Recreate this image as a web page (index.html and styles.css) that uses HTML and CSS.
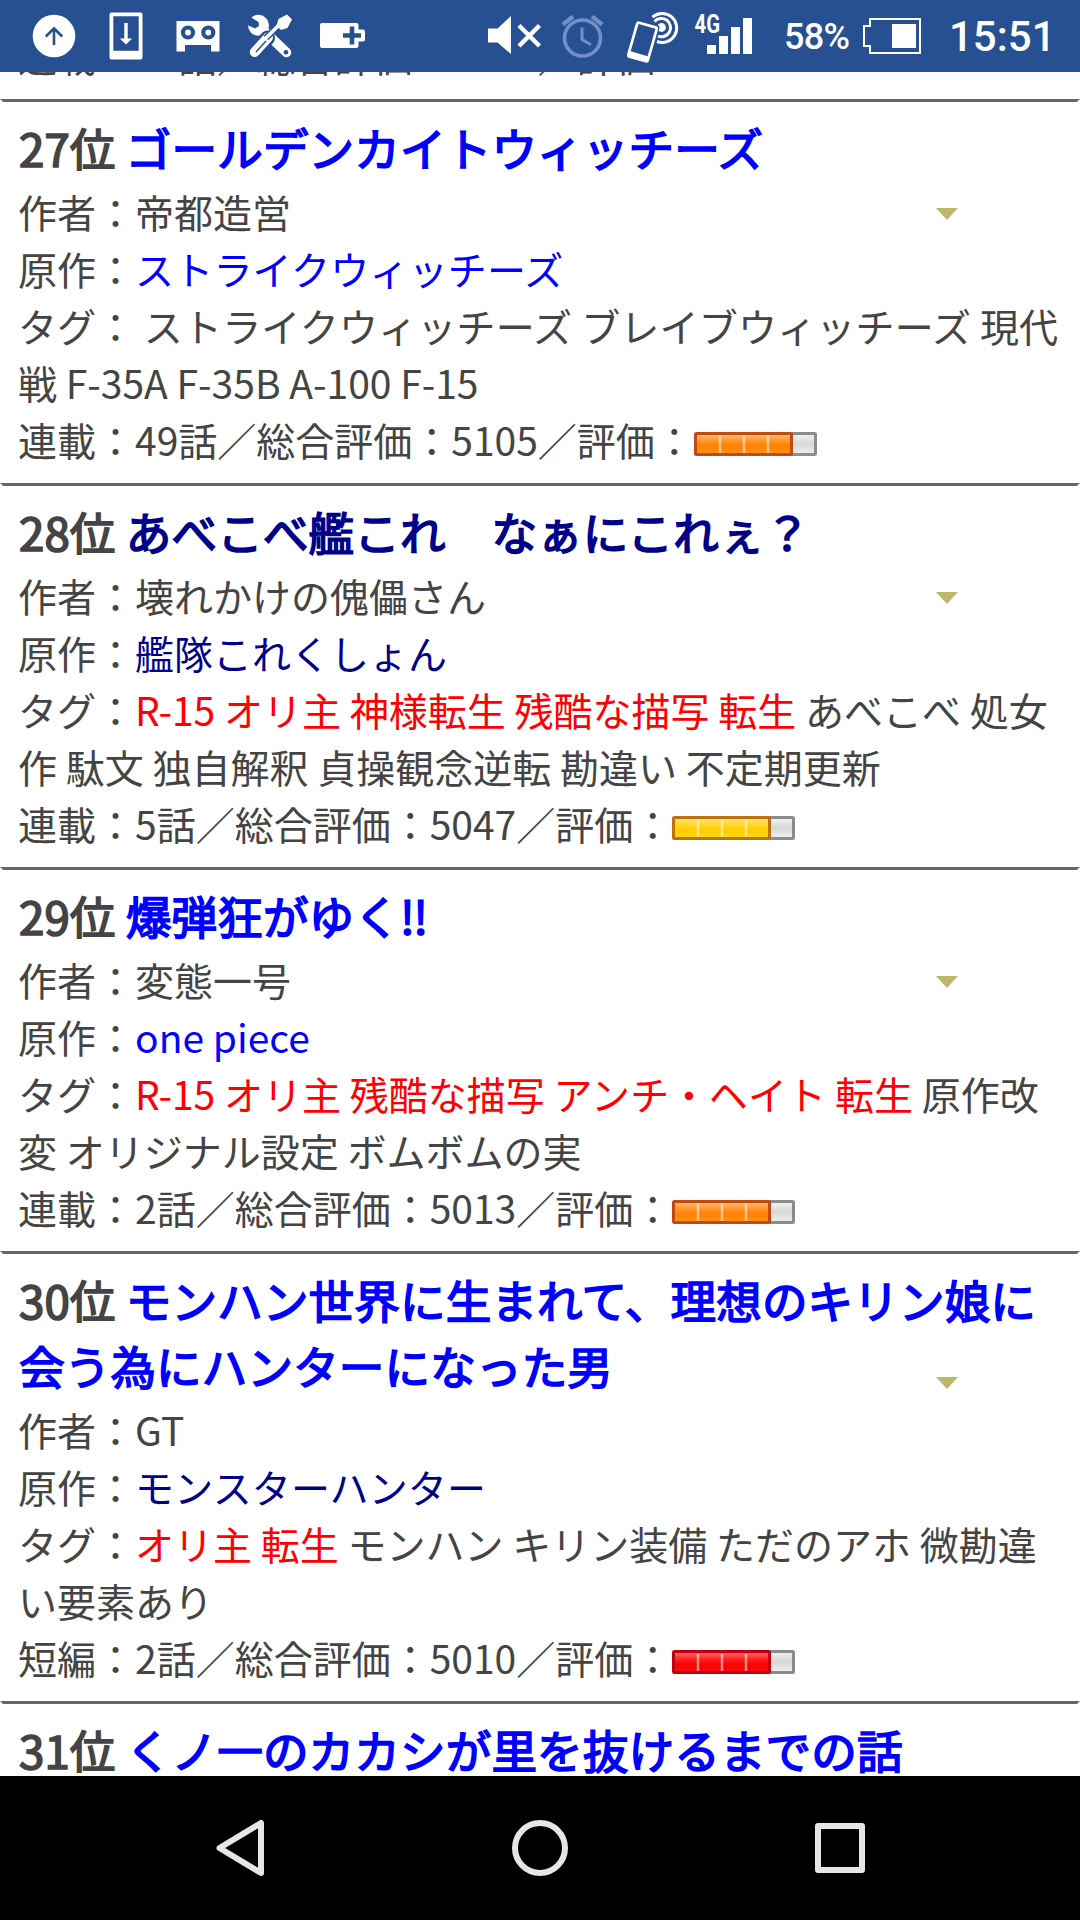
FILE: index.html
```html
<!DOCTYPE html>
<html lang="ja">
<head>
<meta charset="utf-8">
<title>ランキング</title>
<link rel="stylesheet" href="styles.css">
</head>
<body>
<svg class="defs" width="0" height="0" aria-hidden="true">
  <defs>
    <linearGradient id="gray" x1="0" y1="0" x2="0" y2="1"><stop offset="0" stop-color="#f2f2f2"/><stop offset=".5" stop-color="#d8d8d8"/><stop offset="1" stop-color="#f0f0f0"/></linearGradient>
    <linearGradient id="orange" x1="0" y1="0" x2="0" y2="1"><stop offset="0" stop-color="#ffc078"/><stop offset=".4" stop-color="#ff9020"/><stop offset=".6" stop-color="#ff8000"/><stop offset="1" stop-color="#ff9418"/></linearGradient>
    <linearGradient id="yellow" x1="0" y1="0" x2="0" y2="1"><stop offset="0" stop-color="#ffe880"/><stop offset=".4" stop-color="#ffd61c"/><stop offset=".6" stop-color="#ffcc00"/><stop offset="1" stop-color="#ffd820"/></linearGradient>
    <linearGradient id="red" x1="0" y1="0" x2="0" y2="1"><stop offset="0" stop-color="#ff7070"/><stop offset=".4" stop-color="#ff1c1c"/><stop offset=".6" stop-color="#ff0000"/><stop offset="1" stop-color="#f01010"/></linearGradient>
  </defs>
</svg>

<header class="status">
  <svg width="92" height="72" viewBox="0 0 92 72"><circle cx="54" cy="36" r="21.3" fill="#fff"/><path d="M54 45V29M45.800 36.500L54 28.300l8.200 8.200" fill="none" stroke="#265092" stroke-width="2.600"/></svg>
  <svg width="68" height="72" viewBox="92 0 68 72"><path fill="#fff" fill-rule="evenodd" d="M111.500 12.500h29q2 0 2 2v43q0 2-2 2h-29q-2 0-2-2v-43q0-2 2-2zM113.300 16.300v34.500h25.400V16.300z"/><path fill="#fff" d="M124.300 23h3.400v15.500h4.500L126 44.500l-6.200-6h4.500z"/></svg>
  <svg width="74" height="72" viewBox="160 0 74 72"><path fill="#fff" d="M176.500 21h43v30.500h-8.500V45h-26v6.500h-8.500z"/><g fill="#fff" stroke="#265092" stroke-width="4.200"><circle cx="188" cy="32.500" r="5"/><circle cx="208.300" cy="32.500" r="5"/></g></svg>
  <svg width="72" height="72" viewBox="234 0 72 72"><path d="M264 31L286.500 52.500" stroke="#fff" stroke-width="9.500" stroke-linecap="round"/><circle cx="258.500" cy="25.300" r="10.500" fill="#fff"/><path d="M246 14.500l12.500 7.500.5 4-4 2.500-9-4z" fill="#265092"/><circle cx="286" cy="52.300" r="2.300" fill="#265092"/><path d="M255 51.500L267.500 38" stroke="#265092" stroke-width="15" stroke-linecap="round"/><path d="M254.800 52L268 37.500" stroke="#fff" stroke-width="10" stroke-linecap="round"/><path d="M266 38L282 22" stroke="#265092" stroke-width="6.500"/><path d="M264 40L281 23" stroke="#fff" stroke-width="3.800"/><path fill="#fff" d="M276.500 25.500l2-6.500 8.500-4.500 5 5-4.500 8.500-6.500 2z"/><path d="M256 52l10-11" stroke="#265092" stroke-width="1.500"/></svg>
  <svg width="79" height="72" viewBox="306 0 79 72"><path fill="#fff" d="M322 23h34.500q2 0 2 2v4.500h4.500q2 0 2 2v8q0 2-2 2h-4.500V46q0 2-2 2H322q-2 0-2-2V25q0-2 2-2z"/><path d="M343 35.500h18M352 26.500v18" stroke="#265092" stroke-width="4.600"/></svg>
  <span class="spacer"></span>
  <svg width="72" height="72" viewBox="480 0 72 72"><path fill="#fff" d="M488 28.500h9.500l13.500-12.500v38L497.500 42.500H488z"/><path d="M519 25.500l20.500 20.500M539.500 25.500L519 46" stroke="#fff" stroke-width="4.500"/></svg>
  <svg width="64" height="72" viewBox="552 0 64 72"><g fill="none" stroke="#7190c7"><circle cx="582.500" cy="38" r="18" stroke-width="3.600"/><path d="M582 27.500V39.500l9 5.200" stroke-width="3"/><path d="M562.800 24.500l10.200-8M592 16.500l10.200 8" stroke-width="4.200"/></g></svg>
  <svg width="70" height="72" viewBox="616 0 70 72"><g fill="none" stroke="#fff"><path d="M652.500 17.200A14.500 14.500 0 1 1 657 41.500" stroke-width="3"/><path d="M654.500 21.500A9.200 9.200 0 1 1 658 36.200" stroke-width="3"/></g><circle cx="661.500" cy="27.500" r="4.400" fill="#fff"/><g transform="translate(642.500 42) rotate(16)"><rect x="-12.500" y="-20.500" width="25" height="39.500" rx="3" fill="#265092"/><path fill="#fff" fill-rule="evenodd" d="M-8.500-19H8.500q3 0 3 3v32q0 3-3 3H-8.500q-3 0-3-3v-32q0-3 3-3zM-8.800-16.300v28.500H8.800V-16.300z"/></g></svg>
  <svg width="74" height="72" viewBox="686 0 74 72"><path fill="#fff" d="M707 45h9v9h-9zM719 36h9v18h-9zM731 27h9v27h-9zM743 18h9v36h-9z"/><text class="net" x="694.500" y="32.500" textLength="25.500" lengthAdjust="spacingAndGlyphs">4G</text></svg>
  <span class="percent">58%</span>
  <svg width="75" height="72" viewBox="855 0 75 72"><path fill="none" stroke="#fff" stroke-width="2" d="M870 19h50v34h-50v-7h-6V26h6z"/><path fill="#fff" d="M892 24h24v24h-24z"/></svg>
  <span class="clock">15:51</span>
</header>

<main class="list">
  <article class="entry entry-cut">
    <p>連載：52話／総合評価：5127／評価：</p>
  </article>

  <article class="entry">
    <h3>27位 <a>ゴールデンカイトウィッチーズ</a></h3>
    <p>作者：帝都造営</p>
    <p>原作：<a class="kana">ストライクウィッチーズ</a></p>
    <p>タグ： <span class="kana">ストライクウィッチーズ ブレイブウィッチーズ</span> 現代戦 F-35A F-35B A-100 F-15</p>
    <p>連載：49話／総合評価：5105／評価：<svg class="meter orange" width="123" height="24" viewBox="0 0 123 24"><rect class="rest" x="96" y="1.500" width="25.500" height="21" rx="1"/><rect class="fill" x="1.500" y="1.500" width="96" height="21" rx="1"/><path class="ticks" d="M26 4v17M50 4v17M74 4v17"/></svg></p>
    <svg class="arrow" width="22" height="12" viewBox="0 0 22 12"><path d="M0 0h22L11 12z"/></svg>
  </article>

  <article class="entry">
    <h3>28位 <a class="visited">あべこべ艦これ　なぁにこれぇ？</a></h3>
    <p>作者：壊れかけの傀儡さん</p>
    <p>原作：<a class="visited">艦隊これくしょん</a></p>
    <p>タグ：<span class="alert">R-15 オリ主 神様転生 残酷な描写 転生</span> あべこべ 処女作 駄文 独自解釈 貞操観念逆転 勘違い 不定期更新</p>
    <p>連載：5話／総合評価：5047／評価：<svg class="meter yellow" width="123" height="24" viewBox="0 0 123 24"><rect class="rest" x="96" y="1.500" width="25.500" height="21" rx="1"/><rect class="fill" x="1.500" y="1.500" width="96" height="21" rx="1"/><path class="ticks" d="M26 4v17M50 4v17M74 4v17"/></svg></p>
    <svg class="arrow" width="22" height="12" viewBox="0 0 22 12"><path d="M0 0h22L11 12z"/></svg>
  </article>

  <article class="entry">
    <h3>29位 <a>爆弾狂がゆく‼</a></h3>
    <p>作者：変態一号</p>
    <p>原作：<a>one piece</a></p>
    <p>タグ：<span class="alert">R-15 オリ主 残酷な描写 <span class="kana">アンチ・ヘイト</span> 転生</span> 原作改変 オリジナル設定 ボムボムの実</p>
    <p>連載：2話／総合評価：5013／評価：<svg class="meter orange" width="123" height="24" viewBox="0 0 123 24"><rect class="rest" x="96" y="1.500" width="25.500" height="21" rx="1"/><rect class="fill" x="1.500" y="1.500" width="96" height="21" rx="1"/><path class="ticks" d="M26 4v17M50 4v17M74 4v17"/></svg></p>
    <svg class="arrow" width="22" height="12" viewBox="0 0 22 12"><path d="M0 0h22L11 12z"/></svg>
  </article>

  <article class="entry">
    <h3>30位 <a>モンハン世界に生まれて、理想のキリン娘に会う為にハンターになった男</a></h3>
    <p>作者：GT</p>
    <p>原作：<a class="visited kana">モンスターハンター</a></p>
    <p>タグ：<span class="alert">オリ主 転生</span> モンハン キリン装備 ただのアホ 微勘違い要素あり</p>
    <p>短編：2話／総合評価：5010／評価：<svg class="meter red" width="123" height="24" viewBox="0 0 123 24"><rect class="rest" x="96" y="1.500" width="25.500" height="21" rx="1"/><rect class="fill" x="1.500" y="1.500" width="96" height="21" rx="1"/><path class="ticks" d="M26 4v17M50 4v17M74 4v17"/></svg></p>
    <svg class="arrow" width="22" height="12" viewBox="0 0 22 12"><path d="M0 0h22L11 12z"/></svg>
  </article>

  <article class="entry">
    <h3>31位 <a>くノ一のカカシが里を抜けるまでの話</a></h3>
  </article>
</main>

<nav class="navbar">
  <svg width="60" height="60" viewBox="0 0 60 60"><path d="M51 5v50L9.500 30z"/></svg>
  <svg width="60" height="60" viewBox="0 0 60 60"><circle cx="30" cy="30" r="25"/></svg>
  <svg width="60" height="60" viewBox="0 0 60 60"><rect x="8" y="8" width="44" height="44"/></svg>
</nav>
</body>
</html>
```
FILE: styles.css
```css
* { box-sizing: border-box; }

body {
  margin: 0;
  width: 1080px;
  height: 1920px;
  display: flex;
  flex-direction: column;
  overflow: hidden;
  background: #fff;
  color: #444;
  font-family: "Noto Sans CJK JP", sans-serif;
  font-size: 39px;
  line-height: 57px;
}

.defs { position: absolute; }

.status {
  flex: none;
  height: 72px;
  display: flex;
  background: #265092;
  color: #fff;
  font-family: Roboto, sans-serif;
  font-weight: 500;
}
.status svg { flex: none; }
.spacer { flex: none; width: 95px; }
.net { fill: #fff; font-size: 25px; font-weight: 700; }
.percent {
  width: 95px;
  padding-left: 24px;
  font-size: 36px;
  line-height: 75px;
  letter-spacing: -0.7px;
}
.clock {
  padding-left: 19px;
  font-size: 42px;
  line-height: 74px;
}

.list {
  flex: none;
  height: 1704px;
  overflow: hidden;
}

.entry {
  position: relative;
  border: 0 solid transparent;
  border-width: 3px 3px 0;
  border-top-color: #666;
  padding: 12px 15px 15px;
}
.entry-cut {
  margin-top: -45px;
  border-top: 0;
  padding-top: 0;
}

h3 {
  margin: 0 0 3px;
  padding-left: 1px;
  font-size: 45.6px;
  font-weight: 400;
  line-height: 66px;
  letter-spacing: 0.1px;
  -webkit-text-stroke: 1.7px currentColor;
}
p { margin: 0; }
a { color: #00f; }
.visited { color: #00008b; }
.alert { color: #f00; }
.kana { letter-spacing: 0.2px; }

.arrow {
  position: absolute;
  left: 932.5px;
  top: calc(25% + 11px);
  fill: #bdb76b;
}

.meter .rest { fill: url(#gray); stroke: #8c8c8c; stroke-width: 3; }
.meter .fill { stroke-width: 3; }
.meter .ticks { stroke: #fff; stroke-opacity: .5; stroke-width: 2.5; }
.orange .fill { fill: url(#orange); stroke: #bf4a14; }
.yellow .fill { fill: url(#yellow); stroke: #bf7010; }
.red .fill { fill: url(#red); stroke: #bf0010; }

.navbar {
  flex: none;
  height: 144px;
  padding: 0 210px;
  display: flex;
  align-items: center;
  justify-content: space-between;
  background: #000;
}
.navbar svg {
  fill: none;
  stroke: #e6e6e6;
  stroke-width: 6;
  stroke-linejoin: round;
}
```
